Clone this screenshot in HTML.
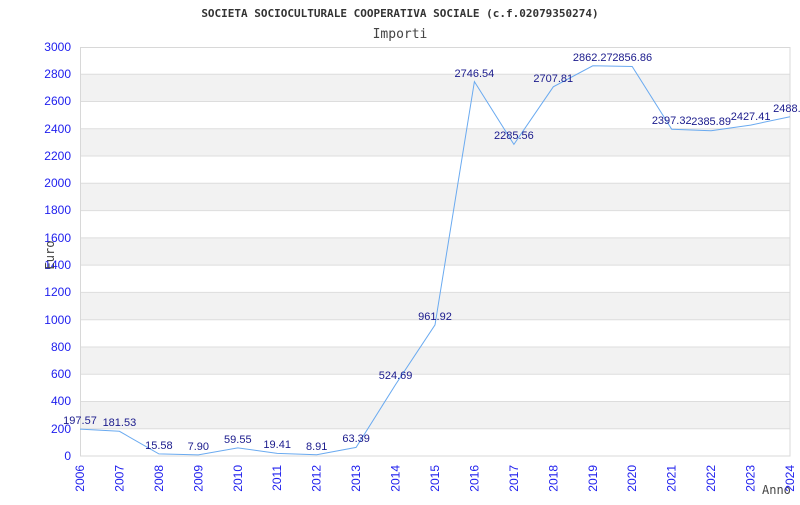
<!DOCTYPE html><html><head><style>body{margin:0;background:#fff}</style></head><body>
<svg width="800" height="500" xmlns="http://www.w3.org/2000/svg" font-family="Liberation Sans, sans-serif">
<text x="400" y="17" text-anchor="middle" font-family="DejaVu Sans Mono, monospace" font-size="11" font-weight="bold" fill="#333">SOCIETA SOCIOCULTURALE COOPERATIVA SOCIALE (c.f.02079350274)</text>
<text x="400" y="38" text-anchor="middle" font-family="DejaVu Sans Mono, monospace" font-size="13" fill="#444">Importi</text>
<g fill="#f2f2f2">
<rect x="80" y="401.5" width="710" height="27.3"/><rect x="80" y="347" width="710" height="27.3"/><rect x="80" y="292.4" width="710" height="27.3"/><rect x="80" y="237.9" width="710" height="27.3"/><rect x="80" y="183.3" width="710" height="27.3"/><rect x="80" y="128.8" width="710" height="27.3"/><rect x="80" y="74.2" width="710" height="27.3"/>
</g>
<g stroke="#ddd" stroke-width="1">
<line x1="80" x2="790" y1="428.7" y2="428.7"/><line x1="80" x2="790" y1="401.5" y2="401.5"/><line x1="80" x2="790" y1="374.2" y2="374.2"/><line x1="80" x2="790" y1="347" y2="347"/><line x1="80" x2="790" y1="319.7" y2="319.7"/><line x1="80" x2="790" y1="292.4" y2="292.4"/><line x1="80" x2="790" y1="265.1" y2="265.1"/><line x1="80" x2="790" y1="237.9" y2="237.9"/><line x1="80" x2="790" y1="210.6" y2="210.6"/><line x1="80" x2="790" y1="183.3" y2="183.3"/><line x1="80" x2="790" y1="156" y2="156"/><line x1="80" x2="790" y1="128.8" y2="128.8"/><line x1="80" x2="790" y1="101.5" y2="101.5"/><line x1="80" x2="790" y1="74.2" y2="74.2"/>
</g>
<rect x="80.5" y="47.5" width="709.5" height="408.5" fill="none" stroke="#d8d8d8"/>
<g fill="#2020ee" font-size="12" text-anchor="end">
<text x="71" y="460">0</text><text x="71" y="433">200</text><text x="71" y="405">400</text><text x="71" y="378">600</text><text x="71" y="351">800</text><text x="71" y="324">1000</text><text x="71" y="296">1200</text><text x="71" y="269">1400</text><text x="71" y="242">1600</text><text x="71" y="214">1800</text><text x="71" y="187">2000</text><text x="71" y="160">2200</text><text x="71" y="133">2400</text><text x="71" y="105">2600</text><text x="71" y="78">2800</text><text x="71" y="51">3000</text>
</g>
<text transform="translate(54,255) rotate(-90)" text-anchor="middle" font-family="DejaVu Sans Mono, monospace" font-size="12" fill="#444">Euro</text>
<text x="762" y="494" font-family="DejaVu Sans Mono, monospace" font-size="12" fill="#444">Anno</text>
<g fill="#2020ee" font-size="12" text-anchor="end">
<text transform="translate(84,465) rotate(-90)">2006</text><text transform="translate(123.4,465) rotate(-90)">2007</text><text transform="translate(162.9,465) rotate(-90)">2008</text><text transform="translate(202.3,465) rotate(-90)">2009</text><text transform="translate(241.8,465) rotate(-90)">2010</text><text transform="translate(281.2,465) rotate(-90)">2011</text><text transform="translate(320.7,465) rotate(-90)">2012</text><text transform="translate(360.1,465) rotate(-90)">2013</text><text transform="translate(399.6,465) rotate(-90)">2014</text><text transform="translate(439,465) rotate(-90)">2015</text><text transform="translate(478.4,465) rotate(-90)">2016</text><text transform="translate(517.9,465) rotate(-90)">2017</text><text transform="translate(557.3,465) rotate(-90)">2018</text><text transform="translate(596.8,465) rotate(-90)">2019</text><text transform="translate(636.2,465) rotate(-90)">2020</text><text transform="translate(675.7,465) rotate(-90)">2021</text><text transform="translate(715.1,465) rotate(-90)">2022</text><text transform="translate(754.6,465) rotate(-90)">2023</text><text transform="translate(794,465) rotate(-90)">2024</text>
</g>
<polyline fill="none" stroke="#6aaaf0" stroke-width="1" points="80,429.1 119.4,431.3 158.9,453.9 198.3,454.9 237.8,447.9 277.2,453.4 316.7,454.8 356.1,447.4 395.6,384.5 435,324.9 474.4,81.6 513.9,144.4 553.3,86.8 592.8,65.8 632.2,66.5 671.7,129.2 711.1,130.7 750.6,125.1 790,116.7"/>
<g fill="#1a1a8c" font-size="11" text-anchor="middle">
<text x="80" y="424">197.57</text><text x="119.4" y="426">181.53</text><text x="158.9" y="449">15.58</text><text x="198.3" y="450">7.90</text><text x="237.8" y="443">59.55</text><text x="277.2" y="448">19.41</text><text x="316.7" y="450">8.91</text><text x="356.1" y="442">63.39</text><text x="395.6" y="379">524.69</text><text x="435" y="320">961.92</text><text x="474.4" y="77">2746.54</text><text x="513.9" y="139">2285.56</text><text x="553.3" y="82">2707.81</text><text x="592.8" y="61">2862.27</text><text x="632.2" y="61">2856.86</text><text x="671.7" y="124">2397.32</text><text x="711.1" y="125">2385.89</text><text x="750.6" y="120">2427.41</text><text x="790" y="112">2488.6</text>
</g>
</svg>
</body></html>
